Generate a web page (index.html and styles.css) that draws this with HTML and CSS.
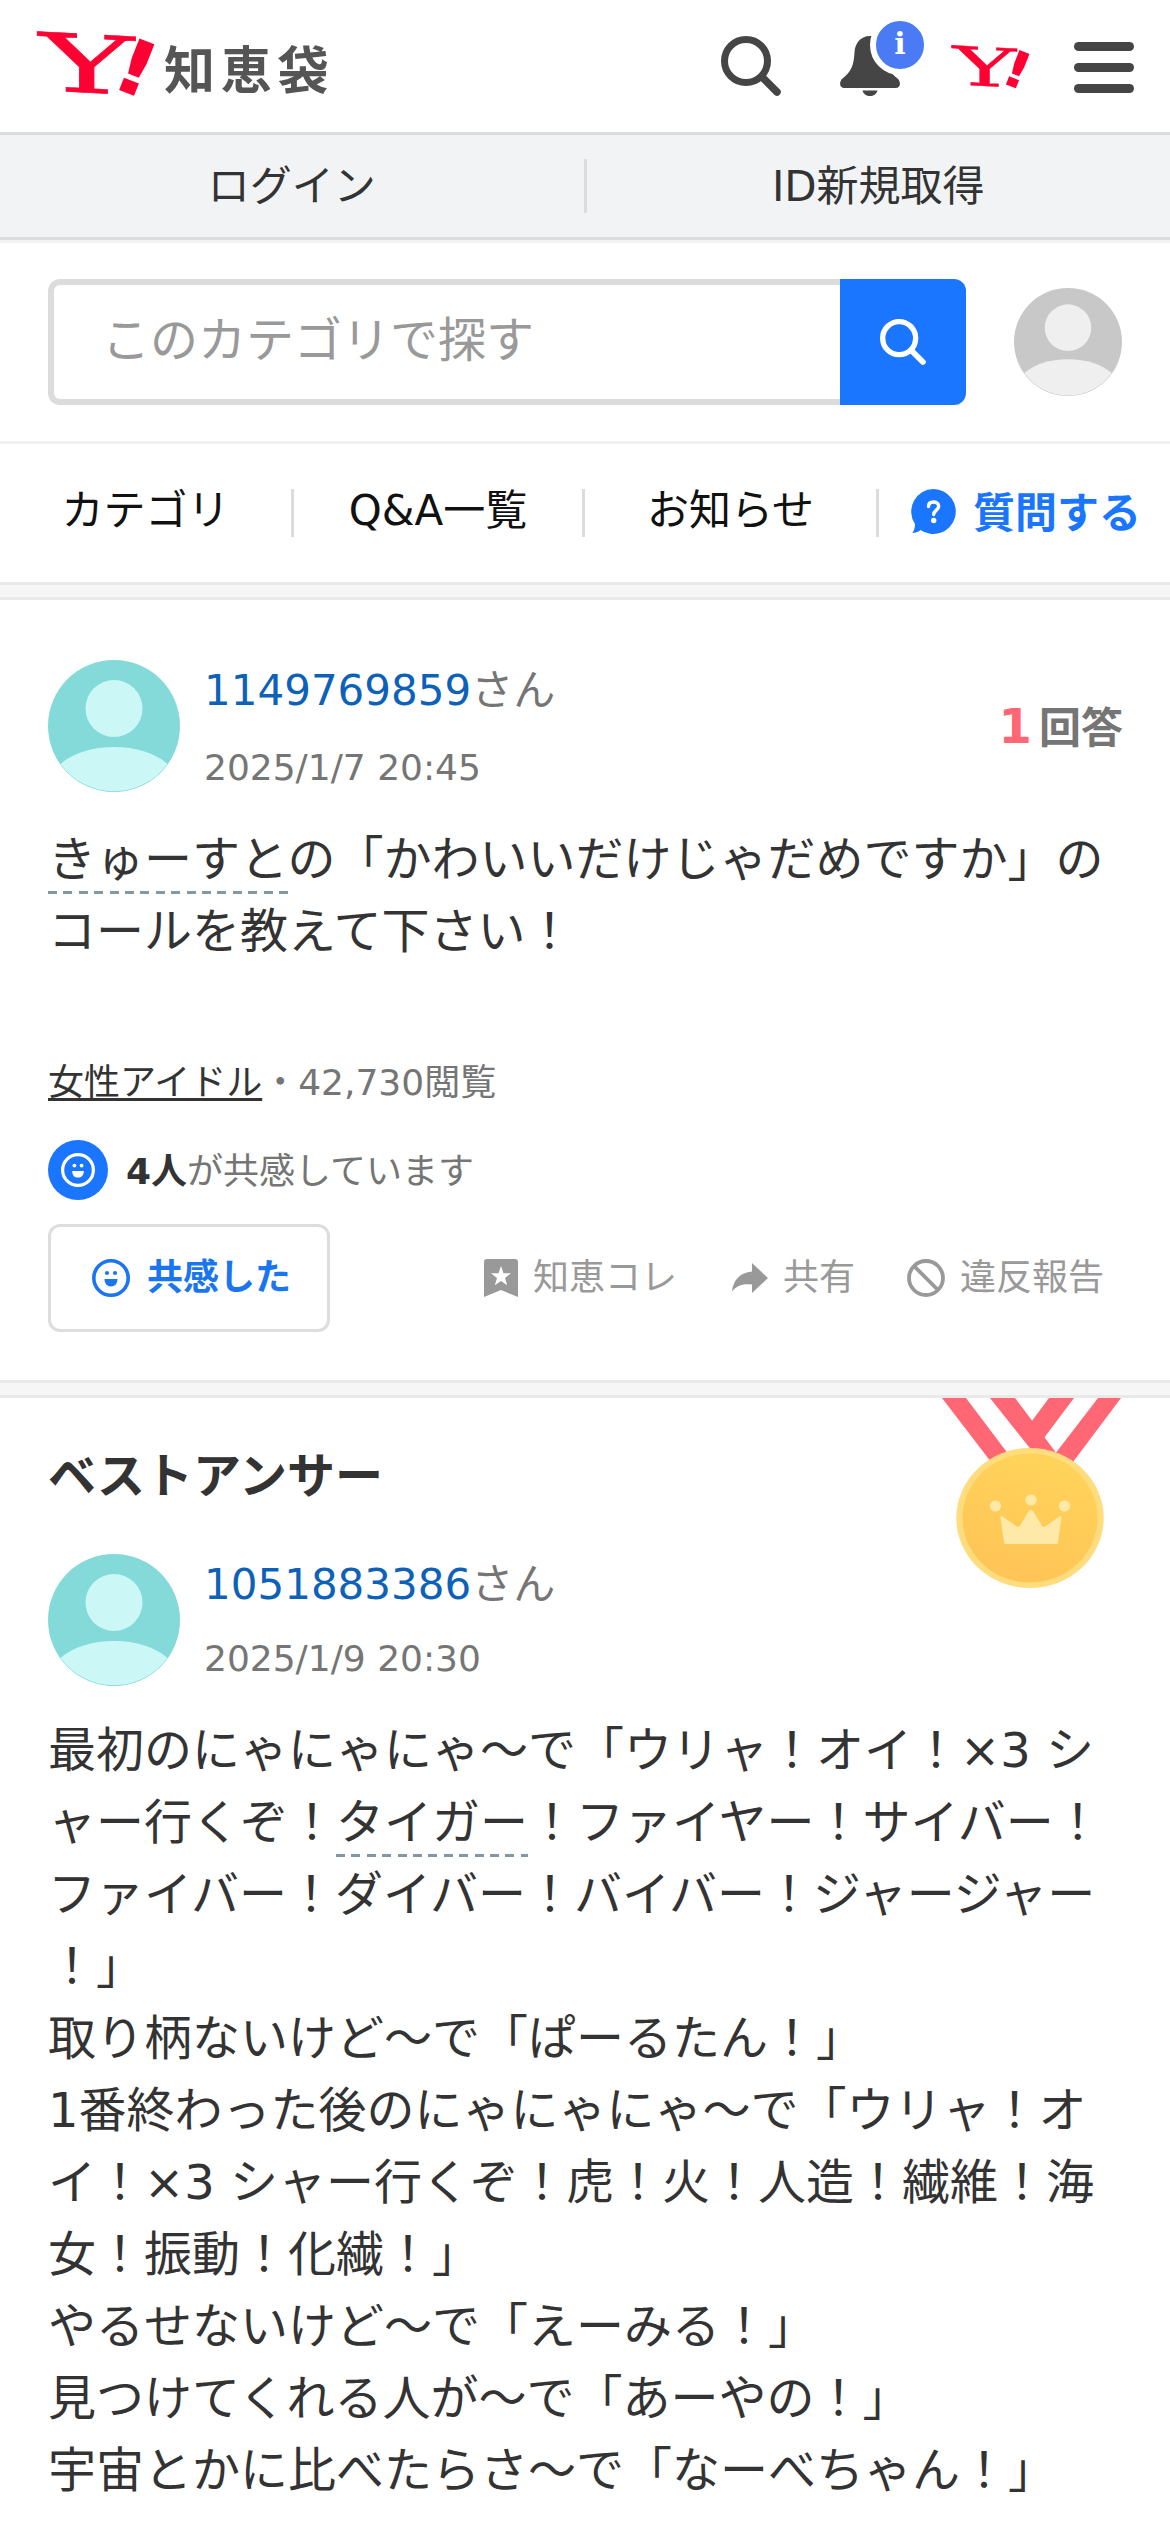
FILE: index.html
```html
<!DOCTYPE html>
<html lang="ja">
<head>
<meta charset="utf-8">
<title>Y!知恵袋</title>
<link rel="stylesheet" href="styles.css">
</head>
<body>
<svg class="defs" width="0" height="0" aria-hidden="true">
  <symbol id="person" viewBox="0 0 132 132">
    <circle class="person-bg" cx="66" cy="66" r="66"/>
    <circle class="person-fg" cx="66" cy="48.5" r="28.5"/>
    <path class="person-fg" d="M12.500 104C25 93 44 87 66 87s41 6 53.500 17A66 66 0 0 1 12.500 104z"/>
  </symbol>
  <symbol id="glass" viewBox="0 0 60 60">
    <circle cx="25" cy="25" r="21.500" fill="none" stroke="currentColor" stroke-width="7"/>
    <path d="M41 41L56 56" stroke="currentColor" stroke-width="7.500" stroke-linecap="round"/>
  </symbol>
  <symbol id="smile" viewBox="0 0 38 38">
    <circle cx="19" cy="19" r="17.200" fill="none" stroke="currentColor" stroke-width="3.600"/>
    <circle cx="15" cy="14" r="2.100" fill="currentColor"/>
    <circle cx="23" cy="14" r="2.100" fill="currentColor"/>
    <path d="M12.500 20h13c0 4.500-2.500 7.500-6.500 7.500s-6.500-3-6.500-7.500z" fill="currentColor"/>
  </symbol>
</svg>

<header class="header">
  <div class="logo">
    <svg class="logo-mark" viewBox="-10 -20 150 110">
      <text class="mark-text" transform="translate(1 2) skewY(3) translate(0 57) scale(1.800 1)" font-size="80">Y</text>
      <text class="mark-bang" transform="translate(88.500 62) rotate(21.600) scale(1.200 1)" font-size="76">!</text>
    </svg>
    <span class="logo-name">知恵袋</span>
  </div>
  <div class="tools">
    <svg class="tool-search" viewBox="0 0 60 60"><use href="#glass"/></svg>
    <div class="bell">
      <svg class="bell-icon" viewBox="0 0 60 60" fill="#454545">
        <path d="M30 0C20 0 15 8 14.500 16C14 29 11 36 2.500 42.500C-1 45.500 -1 52 4.500 52H55.500C61 52 61 45.500 57.500 42.500C49 36 46 29 45.500 16C45 8 40 0 30 0z"/>
        <path d="M22.500 54.500h15c-1 3.700-4 5.500-7.500 5.500s-6.500-1.800-7.500-5.500z"/>
      </svg>
      <span class="badge">i</span>
    </div>
    <svg class="tool-mark" viewBox="-12 -21 150 108">
      <text class="mark-text" transform="translate(1 2) skewY(3) translate(0 57) scale(1.800 1)" font-size="80">Y</text>
      <text class="mark-bang" transform="translate(88.500 62) rotate(21.600) scale(1.200 1)" font-size="76">!</text>
    </svg>
    <div class="menu"><i></i><i></i><i></i></div>
  </div>
</header>

<div class="login">
  <a>ログイン</a><span class="login-line"></span><a>ID新規取得</a>
</div>

<div class="search">
  <div class="search-field">このカテゴリで探す</div>
  <div class="search-button"><svg class="search-icon" viewBox="0 0 60 60"><use href="#glass"/></svg></div>
  <svg class="my-icon" viewBox="0 0 132 132"><use href="#person"/></svg>
</div>

<nav class="nav">
  <a>カテゴリ</a><a>Q&amp;A一覧</a><a>お知らせ</a>
  <a class="ask">
    <svg class="ask-icon" viewBox="0 0 45 45"><path d="M22.500 0A22.500 22.500 0 1 1 9.500 41C7.500 42.800 5 43.800 1.500 44C3 41.500 4 38.500 4 35A22.500 22.500 0 0 1 22.500 0z" fill="#1a75ff"/><path d="M17.500 17.500c0-3 2.200-4.500 5-4.500s5.200 1.500 5.200 4.300c0 3.700-5 4-5 8.200" fill="none" stroke="#fff" stroke-width="3.400" stroke-linecap="round"/><circle cx="22.700" cy="31.500" r="2.700" fill="#fff"/></svg>
    <span>質問する</span>
  </a>
</nav>

<div class="gap"></div>

<article class="question">
  <div class="user">
    <svg class="avatar" viewBox="0 0 132 132"><use href="#person"/></svg>
    <div class="user-text">
      <p class="name"><a>1149769859</a>さん</p>
      <p class="date">2025/1/7 20:45</p>
    </div>
    <p class="count"><b>1</b>回答</p>
  </div>
  <p class="body"><span class="word">きゅーすと</span>の「かわいいだけじゃだめですか」の<br>コールを教えて下さい！</p>
  <p class="meta"><a>女性アイドル</a>・42,730閲覧</p>
  <div class="empathy">
    <span class="empathy-icon"><svg class="smile-small" viewBox="0 0 38 38"><use href="#smile"/></svg></span>
    <p><b>4人</b>が共感しています</p>
  </div>
  <div class="actions">
    <div class="button"><svg class="icon" viewBox="0 0 38 38"><use href="#smile"/></svg><span>共感した</span></div>
    <div class="action collect">
      <svg class="bookmark" viewBox="0 0 34 38"><path fill="#999" fill-rule="evenodd" d="M3 0h28a3 3 0 0 1 3 3v35l-17-7-17 7V3a3 3 0 0 1 3-3zM17 7l-2.500 7.200-7.500 .100 6 4.600-2.200 7.300 6.200-4.300 6.200 4.300-2.200-7.300 6-4.600-7.500-.100z"/></svg>
      <span>知恵コレ</span>
    </div>
    <div class="action share">
      <svg class="arrow" viewBox="0 0 36 30"><path fill="#999" d="M20 0l16 15-16 15v-8.500C11 20.500 5 22 0 28.500C1 17.500 8 9.500 20 8.500z"/></svg>
      <span>共有</span>
    </div>
    <div class="action">
      <svg class="icon" viewBox="0 0 38 38" fill="none" stroke="#999" stroke-width="3.800"><circle cx="19" cy="19" r="17"/><path d="M7 7l24 24"/></svg>
      <span>違反報告</span>
    </div>
  </div>
</article>

<div class="gap"></div>

<article class="answer">
  <svg class="medal" viewBox="0 0 180 192">
    <defs><linearGradient id="gold" x1="0.700" y1="0" x2="0.400" y2="1"><stop offset="0" stop-color="#ffd45a"/><stop offset="1" stop-color="#ffc456"/></linearGradient></defs>
    <g fill="#ff6774"><path d="M0 0h24l43 57-18 7z"/><path d="M179 0h-23l-43 56 18 8z"/><path d="M48 0h25l42 56-24-2z"/><path d="M132 0h-25L84 31l18 9z"/></g>
    <ellipse cx="88" cy="120" rx="73.700" ry="70" fill="#ffdc7d"/>
    <ellipse cx="88" cy="120" rx="67.500" ry="64.500" fill="url(#gold)"/>
    <g fill="#ffe9a8"><circle cx="53.500" cy="108" r="5.600"/><circle cx="89" cy="102" r="5.600"/><circle cx="122.500" cy="108" r="5.600"/><path d="M58.500 119.500c0-1.500 .800-1.800 2-1l14 9.800c1.500 1 2.500 .800 3.500-.500l8.500-14c1.500-2.500 3.500-2.500 5 0l8.500 14c1 1.300 2 1.500 3.500 .500l14-9.800c1.200-.800 2-.500 2 1l-3.500 25c-.300 1.200-1 1.500-2 1.500H64c-1 0-1.700-.300-2-1.500z"/></g>
  </svg>
  <h2 class="title">ベストアンサー</h2>
  <div class="user">
    <svg class="avatar" viewBox="0 0 132 132"><use href="#person"/></svg>
    <div class="user-text user-text--answer">
      <p class="name"><a>1051883386</a>さん</p>
      <p class="date">2025/1/9 20:30</p>
    </div>
  </div>
  <p class="body">最初のにゃにゃにゃ〜で「ウリャ！オイ！×3 シ<br>ャー行くぞ！<span class="word">タイガー</span>！ファイヤー！サイバー！<br>ファイバー！ダイバー！バイバー！ジャージャー<br>！」<br>取り柄ないけど〜で「ぱーるたん！」<br>1番終わった後のにゃにゃにゃ〜で「ウリャ！オ<br>イ！×3 シャー行くぞ！虎！火！人造！繊維！海<br>女！振動！化繊！」<br>やるせないけど〜で「えーみる！」<br>見つけてくれる人が〜で「あーやの！」<br>宇宙とかに比べたらさ〜で「なーべちゃん！」</p>
</article>
</body>
</html>
```
FILE: styles.css
```css
* { box-sizing: border-box; }
html { overflow: hidden; }
body {
  margin: 0;
  width: 1170px;
  height: 2532px;
  overflow: hidden;
  background: #fff;
  color: #333;
  font-family: "DejaVu Sans", "Noto Sans CJK JP", sans-serif;
}
p, h2 { margin: 0; white-space: nowrap; }
svg { display: block; flex: none; }
.defs { position: absolute; }
.logo-mark, .tool-mark { overflow: visible; }
.mark-text { font-family: "DejaVu Serif", serif; fill: #ff0033; stroke: #ff0033; stroke-width: .6px; }
.mark-bang { font-family: "DejaVu Sans", sans-serif; font-weight: 700; fill: #ff0033; text-anchor: middle; }

.header {
  display: flex;
  justify-content: space-between;
  height: 135px;
  padding: 0 36px 0 28px;
  border-bottom: 3px solid #dadcdd;
}
.logo { display: flex; align-items: flex-start; }
.logo-mark { width: 150px; height: 110px; margin: 11px -14px 0 0; }
.logo-name {
  margin-top: 31px;
  font: 700 51px/72px "Noto Sans CJK JP", sans-serif;
  letter-spacing: 5.8px;
  color: #555;
}
.tools { display: flex; align-items: flex-start; padding-top: 36px; color: #454545; }
.tool-search { width: 60px; height: 60px; margin-right: 59px; }
.bell { position: relative; width: 60px; height: 60px; margin-right: 44px; }
.bell-icon { width: 60px; height: 60px; }
.badge {
  position: absolute;
  left: 30px;
  top: -21px;
  width: 60px;
  height: 60px;
  border: 6px solid #fff;
  border-radius: 50%;
  background: #4a7bf5;
  color: #fff;
  font: 700 30px/46px "DejaVu Serif", serif;
  text-align: center;
}
.tool-mark { width: 100px; height: 72px; margin: -5px 30px 0 0; }
.menu { display: flex; flex-direction: column; gap: 12px; width: 60px; padding-top: 6px; }
.menu i { height: 9px; border-radius: 5px; background: #454545; }

.login {
  display: flex;
  align-items: center;
  height: 105px;
  background: #f1f3f5;
  border-bottom: 3px solid #dadcdd;
  font-size: 42px;
  line-height: 60px;
}
.login a { flex: 1; padding-top: 2px; text-align: center; }
.login-line { width: 3px; height: 54px; background: #dadcdd; }

.search {
  display: flex;
  align-items: center;
  height: 204px;
  padding: 0 48px;
  border-top: 3px solid #f1f3f3;
  border-bottom: 3px solid #f1f1f1;
}
.search-field {
  flex: 1;
  height: 126px;
  padding-left: 48px;
  border: 6px solid #dcdcdc;
  border-right: 0;
  border-radius: 12px 0 0 12px;
  font-size: 48px;
  line-height: 110px;
  color: #999;
}
.search-button {
  display: grid;
  place-items: center;
  width: 126px;
  height: 126px;
  border-radius: 0 12px 12px 0;
  background: #1a75ff;
  color: #fff;
}
.search-icon { width: 46px; height: 46px; }
.my-icon { width: 108px; height: 108px; margin-left: 48px; }
.my-icon { --bg: #c8c8c8; --fg: #efefef; }
.avatar { --bg: #84dad8; --fg: #cbf7f7; }
.person-bg { fill: var(--bg); }
.person-fg { fill: var(--fg); }

.nav { display: flex; height: 138px; padding-top: 45px; font-size: 42px; line-height: 43px; color: #111; }
.nav a { width: 294px; height: 48px; border-right: 3px solid #dcdcdc; text-align: center; white-space: nowrap; }
.nav a:nth-child(2) { width: 291px; }
.nav .ask {
  display: flex;
  gap: 17px;
  width: 291px;
  padding-left: 32px;
  border: 0;
  font-weight: 700;
  line-height: 48px;
  color: #1a75ff;
}
.ask-icon { width: 45px; height: 45px; }
.ask span { padding-top: 1px; }

.gap { height: 18px; border: solid #e9e9e9; border-width: 3px 0; background: #f6f6f6; }

.question { height: 780px; padding: 60px 48px 0; }
.user { display: flex; height: 132px; }
.avatar { width: 132px; height: 132px; }
.user-text { display: flex; flex-direction: column; gap: 23px; padding: 1px 0 0 24px; }
.user-text--answer { gap: 20px; }
.name { font-size: 42px; line-height: 60px; color: #757575; }
.name a { color: #0d62b8; }
.date { font-size: 36px; line-height: 48px; color: #757575; }
.count { display: flex; align-items: baseline; gap: 7px; margin: 0 -1px 0 auto; padding-top: 33px; font-size: 42px; line-height: 66px; font-weight: 700; color: #757575; }
.count b { font-size: 48px; color: #ff6774; }
.body { margin-top: 31px; font-size: 48px; line-height: 72px; }
.answer .body { margin-top: 28px; }
.word {
  padding-bottom: 7px;
  background: repeating-linear-gradient(90deg, #8298a5 0 9px, transparent 9px 15.400px) left bottom / 100% 3px no-repeat;
}
.meta { margin-top: 89px; font-size: 36px; line-height: 54px; color: #757575; }
.meta a { color: #333; text-decoration: underline; text-decoration-thickness: 3px; text-underline-offset: 3px; text-decoration-skip-ink: none; }
.empathy { display: flex; align-items: center; gap: 18px; height: 60px; margin-top: 30px; font-size: 36px; line-height: 54px; color: #757575; }
.empathy p { padding-top: 4px; }
.empathy b { color: #333; }
.empathy-icon { display: grid; place-items: center; width: 60px; height: 60px; border-radius: 50%; background: #1a75ff; color: #fff; }
.smile-small { width: 34px; height: 34px; }
.actions { display: flex; align-items: center; height: 108px; margin-top: 24px; font-size: 36px; line-height: 54px; color: #999; white-space: nowrap; }
.button {
  display: flex;
  align-items: center;
  gap: 17px;
  width: 282px;
  height: 108px;
  margin-right: 154px;
  padding-left: 41px;
  border: 3px solid #ddd;
  border-radius: 12px;
  font-weight: 700;
  color: #1a75ef;
}
.icon { width: 38px; height: 38px; }
.action { display: flex; align-items: center; gap: 15px; }
.collect { margin-right: 55px; }
.share { margin-right: 52px; }
.bookmark { width: 34px; height: 38px; }
.arrow { width: 36px; height: 30px; }

.answer { position: relative; padding: 42px 48px 0; }
.medal { position: absolute; left: 942px; top: 0; width: 180px; height: 192px; }
.title { font-size: 48px; line-height: 72px; margin-bottom: 42px; }
```
